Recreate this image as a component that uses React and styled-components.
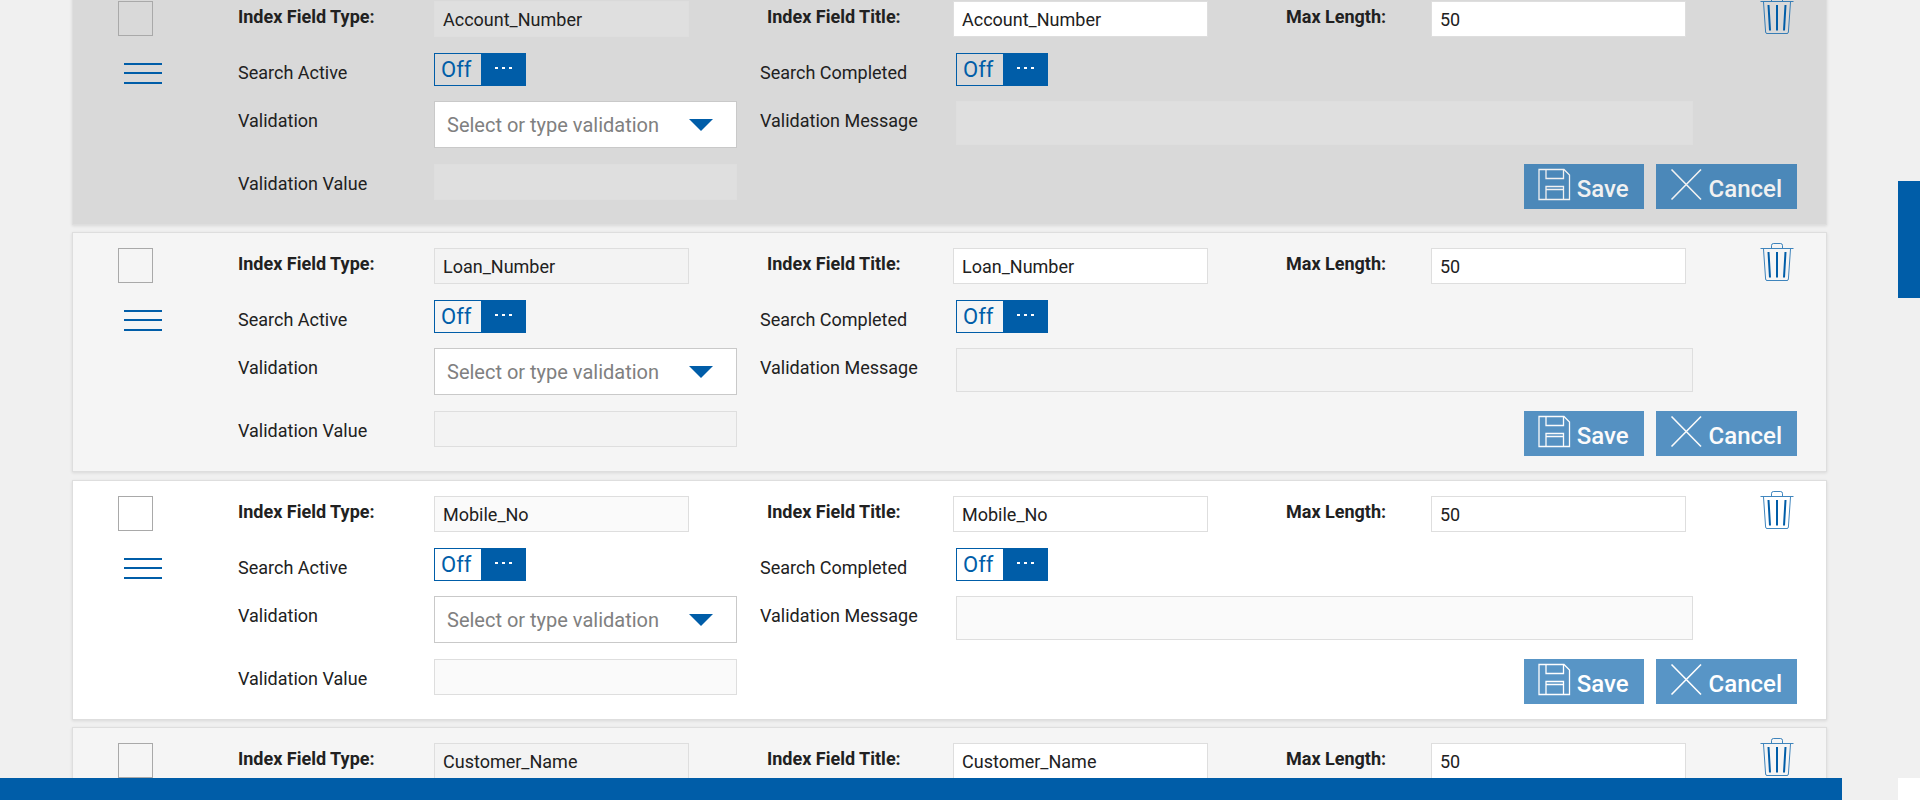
import React, { useId, useState } from "react";
import styled, { createGlobalStyle } from "styled-components";

const BLUE = "#005da8";

const GlobalStyle = createGlobalStyle`
  *, *::before, *::after { box-sizing: border-box; }
  body {
    margin: 0;
    background: #f0f0f0;
    color: #212121;
    font-family: Roboto, "Liberation Sans", sans-serif;
    font-size: 18px;
  }
  input, button, select { font-family: inherit; margin: 0; }
`;

const Page = styled.div`
  display: flex;
  flex-direction: column;
  height: 100vh;
  overflow: hidden;
`;

const Content = styled.div`
  display: flex;
  flex: 1;
  min-height: 0;
  overflow: hidden auto;
  scrollbar-width: none;
`;

const List = styled.main`
  flex: 1;
  min-width: 0;
  margin-top: -15px;
  padding: 0 71px 0 72px;
`;

const SideRail = styled.aside`
  width: 22px;
  padding-top: 181px;
`;

const SideTab = styled.button`
  display: block;
  width: 22px;
  height: 117px;
  padding: 0;
  border: 0;
  background: ${BLUE};
`;

const Footer = styled.footer`
  display: flex;
  flex: none;
  justify-content: space-between;
  height: 22px;
`;

const FooterBar = styled.div`
  flex: 1;
  margin-right: 56px;
  background: ${BLUE};
`;

const FooterCorner = styled.div`
  width: 22px;
  background: #fff;
`;

const Card = styled.form`
  display: flex;
  margin-bottom: 7px;
  padding: 15px 29px 15px 45px;
  border: 1px solid #dedede;
  background: ${(p) => p.$tone};
  box-shadow: 0 1px 3px rgba(0, 0, 0, 0.1);
  &:nth-child(even) { margin-bottom: 8px; }
`;

const Rail = styled.div`
  display: flex;
  flex: none;
  flex-direction: column;
  align-items: flex-start;
  gap: 24px;
  width: 120px;
`;

const Check = styled.input`
  appearance: none;
  width: 35px;
  height: 35px;
  margin: 0;
  border: 1px solid #a9a9a9;
  background: transparent;
  &:checked { background: ${BLUE}; }
`;

const IconButton = styled.button`
  display: flex;
  padding: 0;
  border: 0;
  background: none;
  color: ${BLUE};
  cursor: pointer;
`;

const DragHandle = styled(IconButton)`
  margin-left: 6px;
  padding-top: 3px;
  cursor: move;
`;

const Fields = styled.div`
  display: grid;
  flex: 1;
  min-width: 0;
  row-gap: 15px;
`;

const HeadRow = styled.div`
  display: grid;
  grid-template-columns: 196px minmax(0, 1fr) 264px minmax(0, 1fr) 223px minmax(0, 1fr) 111px;
  height: 37px;
`;

const Row = styled.div`
  display: grid;
  grid-template-columns: 196px minmax(0, 303fr) 219px minmax(0, 737fr) 104px;
  align-items: start;
  height: ${(p) => p.$height}px;
`;

const Label = styled.label`
  padding-left: ${(p) => p.$indent || 0}px;
  line-height: 40px;
  white-space: nowrap;
`;

const HeadLabel = styled(Label)`
  font-weight: 700;
  line-height: 32px;
`;

const TextBox = styled.input`
  width: 100%;
  height: ${(p) => p.$height || 36}px;
  padding: 0 8px;
  border: 1px solid #dedede;
  border-radius: 0;
  background: #fff;
  color: #212121;
  font-size: 18px;
  &:disabled { background: rgba(239, 239, 239, 0.3); }
`;

const TrashSlot = styled.div`
  display: flex;
  justify-content: flex-end;
  align-items: flex-start;
  margin-top: -6px;
  padding-right: 3px;
`;

const Switch = styled.button`
  display: flex;
  width: 92px;
  height: 33px;
  padding: 0;
  border: 1px solid ${BLUE};
  background: transparent;
  color: ${BLUE};
  font-size: 22px;
  line-height: 31px;
`;

const SwitchText = styled.span`
  flex: 1;
  padding-left: 6px;
  text-align: left;
`;

const SwitchKnob = styled.span`
  display: flex;
  width: 44px;
  height: 31px;
  align-items: center;
  justify-content: center;
  background: ${BLUE};
  color: #fff;
`;

const SelectWrap = styled.div`
  display: grid;
  align-items: center;
  & > * { grid-area: 1 / 1; }
  & > svg { justify-self: end; margin-right: 24px; pointer-events: none; }
`;

const Select = styled.select`
  appearance: none;
  width: 100%;
  height: 47px;
  padding: 0 48px 0 12px;
  border: 1px solid #c9c9c9;
  border-radius: 0;
  background: #fff;
  color: #808080;
  font-size: 20px;
`;

const Actions = styled.div`
  display: flex;
  grid-column: 3 / -1;
  justify-content: flex-end;
  gap: 12px;
`;

const ActionButton = styled.button`
  display: flex;
  align-items: flex-start;
  gap: 6px;
  height: 45px;
  padding: 4px 15px 0 14px;
  border: 0;
  background: ${BLUE};
  color: #fff;
  font-size: 24px;
  font-weight: 500;
  line-height: 42px;
  opacity: 0.65;
`;

const TrashIcon = () => (
  <svg width="34" height="40" viewBox="0 0 34 40" fill="none" stroke={BLUE} aria-hidden="true">
    <path d="M0.5 6.5H33.5" strokeOpacity=".75" />
    <path d="M11.5 6V3.5Q11.5 1.5 13.5 1.5H20.5Q22.5 1.5 22.5 3.5V6" strokeOpacity=".75" />
    <path d="M3.5 7L5.6 37Q5.7 38.5 7 38.5H27Q28.3 38.5 28.4 37L30.5 7" strokeOpacity=".75" />
    <path d="M8.5 10L10 35.500M17 10V35.500M25.500 10L24 35.500" strokeWidth="2" />
  </svg>
);

const MenuIcon = () => (
  <svg width="38" height="24" viewBox="0 0 38 24" fill={BLUE} aria-hidden="true">
    <rect y="0" width="38" height="2" />
    <rect y="9" width="38" height="2" />
    <rect y="19" width="38" height="2" />
  </svg>
);

const DotsIcon = () => (
  <svg width="18" height="6" viewBox="0 0 18 6" fill="currentColor" aria-hidden="true">
    <rect x="1" y="0" width="3" height="2" />
    <rect x="8" y="0" width="3" height="2" />
    <rect x="15" y="0" width="3" height="2" />
  </svg>
);

const ArrowIcon = () => (
  <svg width="24" height="12" viewBox="0 0 24 12" fill={BLUE} aria-hidden="true">
    <path d="M0 0H24L12 12Z" />
  </svg>
);

const SaveIcon = () => (
  <svg width="33" height="33" viewBox="0 0 33 33" fill="none" stroke="currentColor" strokeWidth="1.300" aria-hidden="true">
    <path d="M1 1.500H26L31.500 7V31.500H1Z" />
    <path d="M8 1.500V10.500H25.500V1.500" />
    <path d="M8 31.500V18.500H25.500V31.500M8 21.500H25.500" />
  </svg>
);

const CloseIcon = () => (
  <svg width="33" height="33" viewBox="0 0 33 33" fill="none" stroke="currentColor" strokeWidth="1.600" aria-hidden="true">
    <path d="M1.500 1.500L31 31.500M31 1.500L1.500 31.500" />
  </svg>
);

function Toggle({ id }) {
  const [on, setOn] = useState(false);
  return (
    <Switch id={id} type="button" role="switch" aria-checked={on} onClick={() => setOn(!on)}>
      <SwitchText>{on ? "On" : "Off"}</SwitchText>
      <SwitchKnob><DotsIcon /></SwitchKnob>
    </Switch>
  );
}

function FieldCard({ name, tone }) {
  const id = useId();
  return (
    <Card $tone={tone} onSubmit={(e) => e.preventDefault()}>
      <Rail>
        <Check type="checkbox" aria-label={`Select ${name}`} />
        <DragHandle type="button" aria-label={`Reorder ${name}`}><MenuIcon /></DragHandle>
      </Rail>
      <Fields>
        <HeadRow>
          <HeadLabel htmlFor={`${id}-type`}>Index Field Type:</HeadLabel>
          <TextBox id={`${id}-type`} defaultValue={name} disabled />
          <HeadLabel htmlFor={`${id}-title`} $indent={78}>Index Field Title:</HeadLabel>
          <TextBox id={`${id}-title`} defaultValue={name} />
          <HeadLabel htmlFor={`${id}-max`} $indent={78}>Max Length:</HeadLabel>
          <TextBox id={`${id}-max`} defaultValue="50" />
          <TrashSlot>
            <IconButton type="button" aria-label={`Delete ${name}`}><TrashIcon /></IconButton>
          </TrashSlot>
        </HeadRow>
        <Row $height={33}>
          <Label htmlFor={`${id}-active`}>Search Active</Label>
          <Toggle id={`${id}-active`} />
          <Label htmlFor={`${id}-completed`} $indent={23}>Search Completed</Label>
          <Toggle id={`${id}-completed`} />
        </Row>
        <Row $height={48}>
          <Label htmlFor={`${id}-validation`}>Validation</Label>
          <SelectWrap>
            <Select id={`${id}-validation`} defaultValue="">
              <option value="">Select or type validation</option>
            </Select>
            <ArrowIcon />
          </SelectWrap>
          <Label htmlFor={`${id}-message`} $indent={23}>Validation Message</Label>
          <TextBox id={`${id}-message`} $height={44} disabled />
        </Row>
        <Row $height={45}>
          <Label htmlFor={`${id}-value`}>Validation Value</Label>
          <TextBox id={`${id}-value`} disabled />
          <Actions>
            <ActionButton type="submit"><SaveIcon />Save</ActionButton>
            <ActionButton type="button"><CloseIcon />Cancel</ActionButton>
          </Actions>
        </Row>
      </Fields>
    </Card>
  );
}

const FIELDS = [
  { name: "Account_Number", tone: "#d9d9d9" },
  { name: "Loan_Number", tone: "#f5f5f5" },
  { name: "Mobile_No", tone: "#fff" },
  { name: "Customer_Name", tone: "#f5f5f5" },
];

export default function App() {
  return (
    <>
      <GlobalStyle />
      <Page>
        <Content>
          <List>
            {FIELDS.map((f) => <FieldCard key={f.name} {...f} />)}
          </List>
          <SideRail><SideTab type="button" aria-label="Open side panel" /></SideRail>
        </Content>
        <Footer>
          <FooterBar />
          <FooterCorner />
        </Footer>
      </Page>
    </>
  );
}
